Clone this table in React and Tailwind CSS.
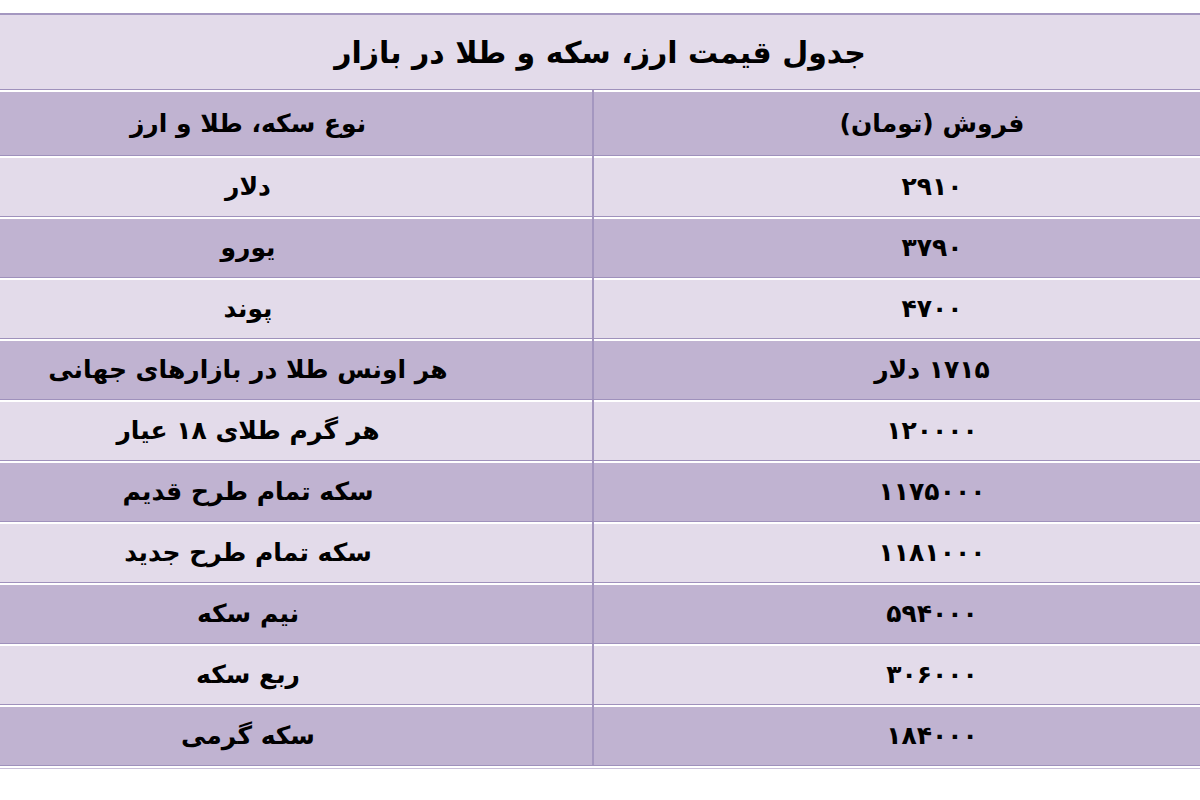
const ROWS = [
  ['دلار', '۲۹۱۰'],
  ['یورو', '۳۷۹۰'],
  ['پوند', '۴۷۰۰'],
  ['هر اونس طلا در بازارهای جهانی', '۱۷۱۵ دلار'],
  ['هر گرم طلای ۱۸ عیار', '۱۲۰۰۰۰'],
  ['سکه تمام طرح قدیم', '۱۱۷۵۰۰۰'],
  ['سکه تمام طرح جدید', '۱۱۸۱۰۰۰'],
  ['نیم سکه', '۵۹۴۰۰۰'],
  ['ربع سکه', '۳۰۶۰۰۰'],
  ['سکه گرمی', '۱۸۴۰۰۰'],
];

function Row({ name, price, dark, height = 'h-[61px]' }) {
  return (
    <div
      className={`grid grid-cols-[606px_594px] ${height} border-t border-[#9f91bc] shadow-[inset_0_2px_0_#ffffff] ${dark ? 'bg-[#c0b3d1]' : 'bg-[#e3dbea]'}`}
    >
      <div className="flex items-center justify-center pl-[70px] pt-[2px] text-[25px] font-bold">
        {price}
      </div>
      <div className="flex items-center justify-center pr-[96px] pt-[2px] text-[25px] font-bold border-r-2 border-[#a497c0]">
        {name}
      </div>
    </div>
  );
}

export default function App() {
  return (
    <div
      dir="rtl"
      className="w-[1200px] h-[800px] bg-white text-black overflow-hidden"
      style={{ fontFamily: '"DejaVu Sans", sans-serif' }}
    >
      <div className="pt-[13px]">
        <div className="h-[76px] border-t-2 border-[#a497c0] bg-[#e3dbea] flex items-center justify-center text-[30px] font-bold">
          جدول قیمت ارز، سکه و طلا در بازار
        </div>
        <Row name="نوع سکه، طلا و ارز" price="فروش (تومان)" dark height="h-[66px]" />
        {ROWS.map(([name, price], i) => (
          <Row key={i} name={name} price={price} dark={i % 2 === 1} />
        ))}
        <div className="h-[3px] border-t border-[#9f91bc] bg-white" />
        <div className="h-px bg-[#c9c0da]" />
      </div>
    </div>
  );
}
